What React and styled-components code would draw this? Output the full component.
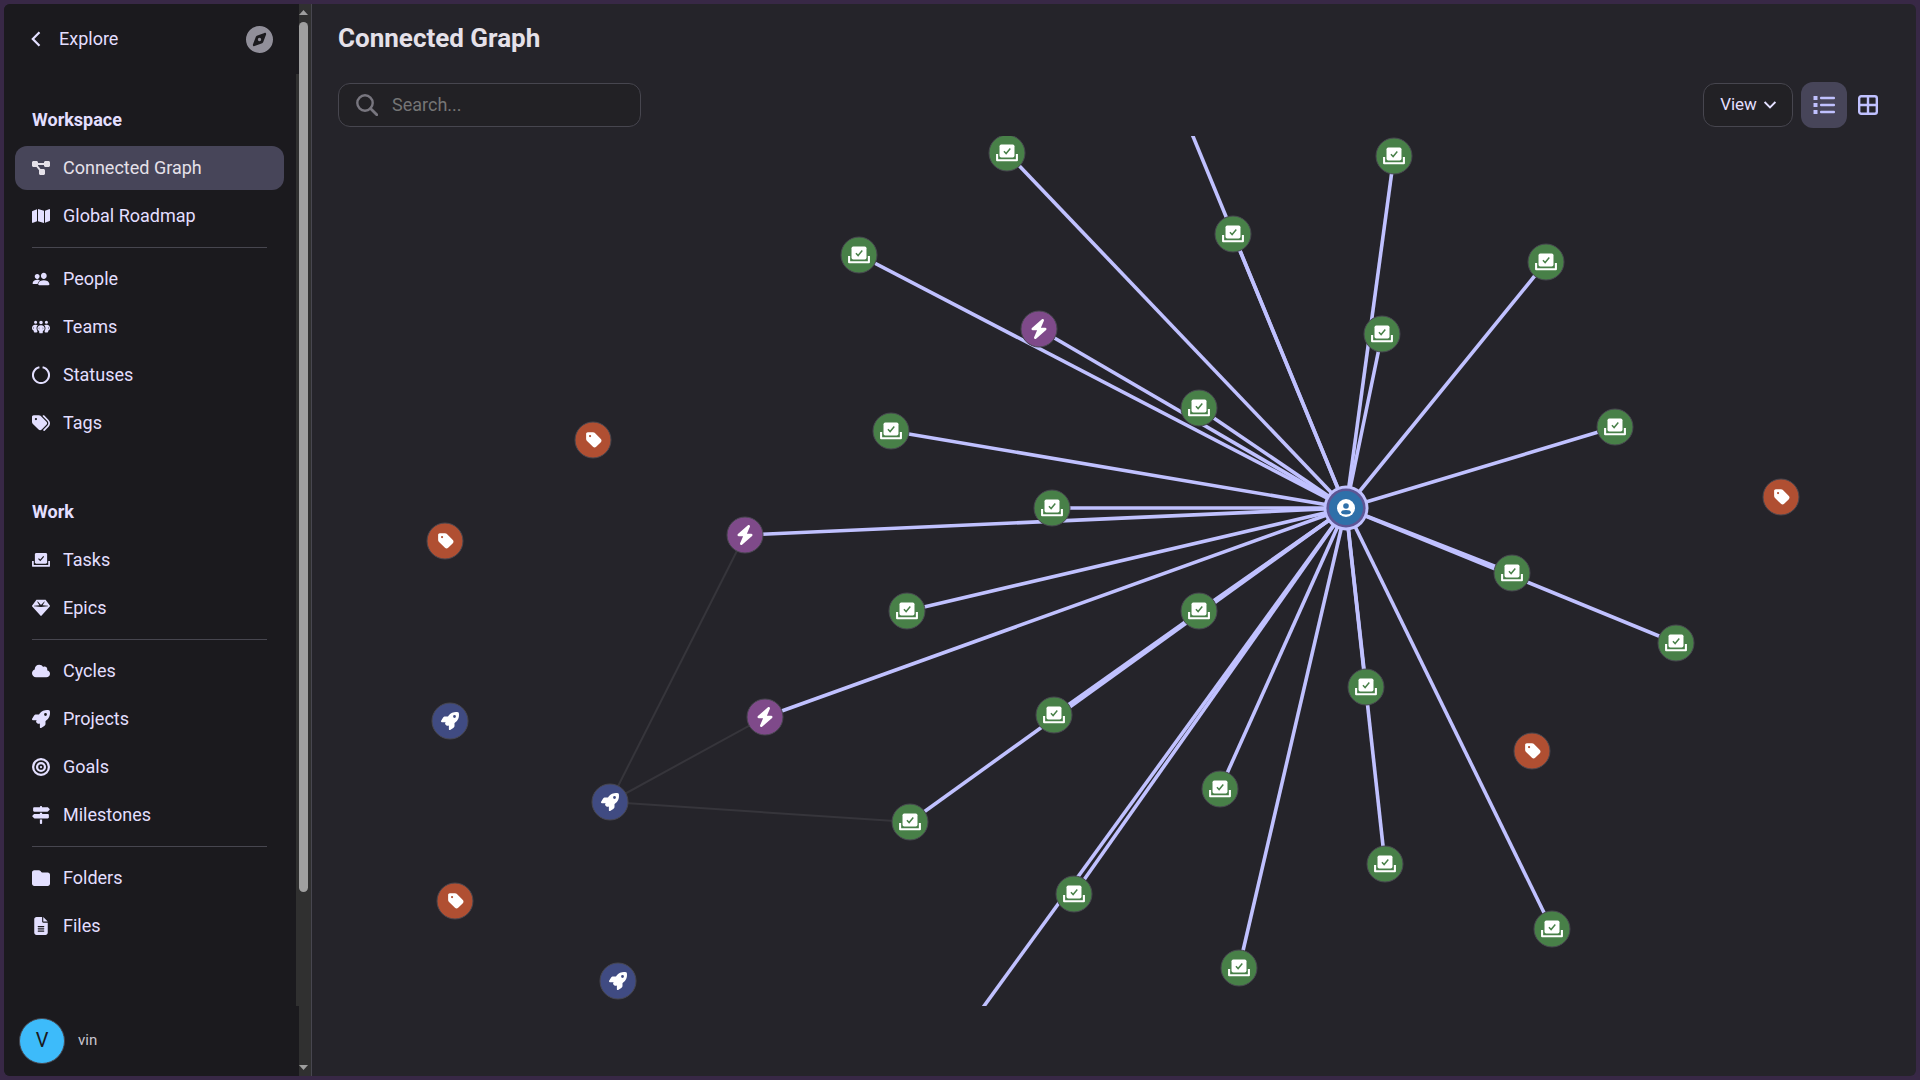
import { useState } from "react";
import styled, { createGlobalStyle, css } from "styled-components";
import {
    FaBolt,
    FaBullseye,
    FaCloud,
    FaCompass,
    FaDiagramProject,
    FaFileLines,
    FaFolder,
    FaGem,
    FaMap,
    FaPeopleGroup,
    FaRocket,
    FaSignsPost,
    FaTag,
    FaTags,
} from "react-icons/fa6";
import { IoPeople } from "react-icons/io5";

const FRAME = "#382846";
const SIDEBAR = "#1b1a1e";
const SURFACE = "#25242a";
const FIELD = "#222125";
const SELECTED = "#474559";
const OUTLINE = "#47464f";
const TRACK = "#303030";
const THUMB = "#9f9f9f";
const TEXT = "#e3dfff";
const TITLE = "#e5e1e9";
const MUTED = "#918f9a";
const PRIMARY = "#c0c1ff";
const AVATAR = "#3dbbfa";

const GlobalStyle = createGlobalStyle`
    * {
        box-sizing: border-box;
    }
    body {
        margin: 0;
        background-color: ${FRAME};
        font-family: Roboto, "Liberation Sans", sans-serif;
        font-size: 18px;
        color: ${TEXT};
    }
    button, input {
        font: inherit;
        color: inherit;
    }
`

const TaskIcon = ({ size = 18, x, y, check = SIDEBAR }) => (
    <svg width={size} height={size} x={x} y={y} viewBox="0 0 20 20" fill="none" aria-hidden="true">
        <rect x="3.2" y="2.2" width="13.6" height="12" rx="1.6" fill="currentColor" />
        <path d="M1 11v5.6h18V11" stroke="currentColor" strokeWidth="1.9" strokeLinejoin="round" />
        <path d="m7.2 8.4 2 2.1 3.8-4.6" stroke={check} strokeWidth="1.3" />
    </svg>
)

const StatusIcon = () => (
    <svg width="18" height="18" viewBox="0 0 18 18" fill="none" aria-hidden="true">
        <path d="M10.6 1.2a8 8 0 1 1-3.2 0" stroke="currentColor" strokeWidth="2" />
    </svg>
)

const sections = [
    {
        title: "Workspace",
        groups: [
            [
                { name: "Connected Graph", icon: FaDiagramProject },
                { name: "Global Roadmap", icon: FaMap },
            ],
            [
                { name: "People", icon: IoPeople },
                { name: "Teams", icon: FaPeopleGroup },
                { name: "Statuses", icon: StatusIcon },
                { name: "Tags", icon: FaTags },
            ],
        ],
    },
    {
        title: "Work",
        groups: [
            [
                { name: "Tasks", icon: TaskIcon },
                { name: "Epics", icon: FaGem },
            ],
            [
                { name: "Cycles", icon: FaCloud },
                { name: "Projects", icon: FaRocket },
                { name: "Goals", icon: FaBullseye },
                { name: "Milestones", icon: FaSignsPost },
            ],
            [
                { name: "Folders", icon: FaFolder },
                { name: "Files", icon: FaFileLines },
            ],
        ],
    },
]

const nodeColors = {
    task: "#488048",
    epic: "#7f4a8a",
    tag: "#b04f32",
    project: "#404b82",
    person: "#2f70a9",
}

const person = { x: 1034, y: 372 };

const nodes = [
    { type: "task", x: 695, y: 17 },
    { type: "task", x: 1082, y: 20 },
    { type: "task", x: 921, y: 98 },
    { type: "task", x: 547, y: 119 },
    { type: "task", x: 1234, y: 126 },
    { type: "task", x: 1070, y: 198 },
    { type: "task", x: 887, y: 272 },
    { type: "task", x: 579, y: 295 },
    { type: "task", x: 1303, y: 291 },
    { type: "task", x: 740, y: 372 },
    { type: "task", x: 1200, y: 437 },
    { type: "task", x: 1364, y: 507 },
    { type: "task", x: 595, y: 475 },
    { type: "task", x: 887, y: 475 },
    { type: "task", x: 1054, y: 551 },
    { type: "task", x: 742, y: 579 },
    { type: "task", x: 908, y: 653 },
    { type: "task", x: 598, y: 686 },
    { type: "task", x: 1073, y: 728 },
    { type: "task", x: 762, y: 758 },
    { type: "task", x: 1240, y: 793 },
    { type: "task", x: 927, y: 832 },
    // these two sit outside the visible part of the canvas
    { type: "task", x: 857, y: -58 },
    { type: "task", x: 635, y: 921 },
    { type: "epic", x: 727, y: 193 },
    { type: "epic", x: 433, y: 399 },
    { type: "epic", x: 453, y: 581 },
    { type: "tag", x: 281, y: 304 },
    { type: "tag", x: 133, y: 405 },
    { type: "tag", x: 143, y: 765 },
    { type: "tag", x: 1469, y: 361 },
    { type: "tag", x: 1220, y: 615 },
    { type: "project", x: 138, y: 585 },
    { type: "project", x: 298, y: 666 },
    { type: "project", x: 306, y: 845 },
]

const projectLinks = [
    { x1: 298, y1: 666, x2: 433, y2: 399 },
    { x1: 298, y1: 666, x2: 453, y2: 581 },
    { x1: 298, y1: 666, x2: 598, y2: 686 },
]

const Node = ({ type, x, y }) => {
    return (
        <g transform={`translate(${x} ${y})`} color="#fff">
            <circle r="18" fill={nodeColors[type]} stroke={OUTLINE} strokeWidth="1" />
            {type == "task" && <TaskIcon size={22} x={-11} y={-11} check={nodeColors.task} />}
            {type == "epic" && <FaBolt size={20} x={-10} y={-10} />}
            {type == "tag" && <FaTag size={18} x={-8} y={-9} />}
            {type == "project" && <FaRocket size={18} x={-9} y={-9} />}
        </g>
    )
}

const Graph = () => {
    const linked = nodes.filter(i => i.type == "task" || i.type == "epic");

    return (
        <Canvas role="img" aria-label="Connected graph">
            {projectLinks.map((link, index) => (
                <line key={index} {...link} stroke="#36353b" strokeWidth="2" />
            ))}
            {linked.map((node, index) => (
                <line
                    key={index}
                    x1={person.x}
                    y1={person.y}
                    x2={node.x}
                    y2={node.y}
                    stroke={PRIMARY}
                    strokeWidth="3.6"
                />
            ))}
            {nodes.map((node, index) => <Node key={index} {...node} />)}
            <g transform={`translate(${person.x} ${person.y})`}>
                <circle r="22.5" fill={PRIMARY} />
                <circle r="19.6" fill="#5d5594" />
                <circle r="17" fill={nodeColors.person} />
                <circle r="9" fill="#fff" />
                <circle cy="-2" r="2.8" fill={nodeColors.person} />
                <ellipse cy="4.2" rx="4.8" ry="2.2" fill={nodeColors.person} />
            </g>
        </Canvas>
    )
}

const Sidebar = () => {
    const [active, setActive] = useState("Connected Graph");

    return (
        <SidebarWrap>
            <SidebarContent>
                <SidebarHeader>
                    <BackButton type="button">
                        <svg width="10" height="16" viewBox="0 0 10 16" fill="none" aria-hidden="true">
                            <path d="M8.5 1.2 1.8 8l6.7 6.8" stroke="currentColor" strokeWidth="2.2" />
                        </svg>
                        <span>Explore</span>
                    </BackButton>
                    <CompassButton type="button" aria-label="Explore workspace">
                        <FaCompass size={27} />
                    </CompassButton>
                </SidebarHeader>
                <Nav>
                    {sections.map(section => (
                        <Section key={section.title}>
                            <SectionTitle>{section.title}</SectionTitle>
                            {section.groups.map((group, index) => (
                                <Group key={index}>
                                    {group.map(({ name, icon: Icon }) => (
                                        <NavItem
                                            key={name}
                                            href="#"
                                            $isActive={active == name}
                                            onClick={() => setActive(name)}
                                        >
                                            <Icon size={18} />
                                            <span>{name}</span>
                                        </NavItem>
                                    ))}
                                </Group>
                            ))}
                        </Section>
                    ))}
                </Nav>
                <Profile>
                    <Avatar>V</Avatar>
                    <span>vin</span>
                </Profile>
            </SidebarContent>
            <Scrollbar aria-hidden="true">
                <svg width="9" height="5" viewBox="0 0 9 5"><path d="M0 5 4.5 0 9 5z" fill={THUMB} /></svg>
                <ScrollArea>
                    <Thumb />
                </ScrollArea>
                <svg width="9" height="5" viewBox="0 0 9 5"><path d="M0 0l4.5 5L9 0z" fill={THUMB} /></svg>
            </Scrollbar>
        </SidebarWrap>
    )
}

const App = () => {
    const [layout, setLayout] = useState("list");

    return (
        <>
            <GlobalStyle />
            <Window>
                <Sidebar />
                <Main>
                    <PageTitle>Connected Graph</PageTitle>
                    <Toolbar>
                        <SearchField>
                            <svg width="22" height="22" viewBox="0 0 22 22" fill="none" aria-hidden="true">
                                <circle cx="9" cy="9" r="7.7" stroke="currentColor" strokeWidth="2.4" />
                                <path d="m14.5 14.5 6.3 6.3" stroke="currentColor" strokeWidth="2.8" strokeLinecap="round" />
                            </svg>
                            <input type="text" placeholder="Search..." aria-label="Search" />
                        </SearchField>
                        <Actions>
                            <ViewButton type="button">
                                <span>View</span>
                                <svg width="12" height="8" viewBox="0 0 12 8" fill="none" aria-hidden="true">
                                    <path d="m.6 1 5.4 5.4L11.4 1" stroke="currentColor" strokeWidth="1.9" />
                                </svg>
                            </ViewButton>
                            <Toggles>
                                <Toggle
                                    type="button"
                                    aria-label="List"
                                    $isActive={layout == "list"}
                                    onClick={() => setLayout("list")}
                                >
                                    <svg width="22" height="18" viewBox="0 0 22 18" fill="currentColor" aria-hidden="true">
                                        <path d="M.5 0h4v4h-4zM.5 7h4v4h-4zM.5 14h4v4h-4z" />
                                        <rect x="7" y=".7" width="15" height="2.6" rx="1" />
                                        <rect x="7" y="7.7" width="15" height="2.6" rx="1" />
                                        <rect x="7" y="14.7" width="15" height="2.6" rx="1" />
                                    </svg>
                                </Toggle>
                                <Toggle
                                    type="button"
                                    aria-label="Grid"
                                    $isActive={layout == "grid"}
                                    onClick={() => setLayout("grid")}
                                >
                                    <svg width="20" height="20" viewBox="0 0 20 20" fill="none" stroke="currentColor" strokeWidth="2.4" aria-hidden="true">
                                        <rect x="1.2" y="1.2" width="17.6" height="17.6" rx="2" />
                                        <path d="M10 1v18M1 10h18" />
                                    </svg>
                                </Toggle>
                            </Toggles>
                        </Actions>
                    </Toolbar>
                    <Graph />
                </Main>
            </Window>
        </>
    )
}

export default App;

const Window = styled.div`
    display: flex;
    min-height: calc(100vh - 8px);
    margin: 4px;
    border-radius: 6px;
    overflow: hidden;
    background-color: ${SURFACE};
`
const SidebarWrap = styled.aside`
    display: flex;
    flex: none;
    background-color: ${SIDEBAR};
    border-right: 1px solid ${OUTLINE};
`
const SidebarContent = styled.div`
    display: flex;
    flex-direction: column;
    width: 295px;
`
const SidebarHeader = styled.div`
    display: flex;
    justify-content: space-between;
    align-items: center;
    height: 70px;
    padding: 0 26px 0 27px;
`
const BackButton = styled.button`
    display: flex;
    align-items: center;
    gap: 18px;
    padding: 0;
    border: none;
    background: none;
    cursor: pointer;

    span {
        padding-bottom: 2px;
    }
`
const CompassButton = styled.button`
    display: flex;
    padding: 0;
    border: none;
    background: none;
    color: ${MUTED};
    cursor: pointer;
`
const Nav = styled.nav`
    display: flex;
    flex-direction: column;
    flex: 1;
    gap: 55px;
    padding: 34px 12px 32px 11px;
    border-right: 3px solid ${TRACK};
`
const Section = styled.div`
    display: flex;
    flex-direction: column;
`
const SectionTitle = styled.h2`
    margin: 0 17px 14px;
    font-size: 18px;
    line-height: 24px;
    font-weight: 700;
`
const Group = styled.div`
    display: flex;
    flex-direction: column;
    gap: 4px;

    & + &::before {
        content: "";
        height: 1px;
        margin: 9px 17px 5px;
        background-color: ${OUTLINE};
    }
`
const NavItem = styled.a((props) => css`
    display: flex;
    align-items: center;
    gap: 13px;
    height: 44px;
    padding: 0 17px;
    border-radius: 12px;
    color: ${props.$isActive ? TITLE : TEXT};
    background-color: ${props.$isActive ? SELECTED : 'transparent'};
    text-decoration: none;

    svg {
        flex: none;
    }
    span {
        padding-bottom: 2px;
    }
`)
const Profile = styled.div`
    display: flex;
    align-items: center;
    gap: 13px;
    height: 70px;
    padding: 0 15px;
    font-size: 15px;
    color: #c8c5d0;

    span {
        padding-bottom: 2px;
    }
`
const Avatar = styled.div`
    display: flex;
    justify-content: center;
    align-items: center;
    width: 46px;
    height: 46px;
    padding-bottom: 2px;
    border: 1px solid ${OUTLINE};
    border-radius: 50%;
    font-size: 20px;
    color: ${SIDEBAR};
    background-color: ${AVATAR};
`
const Scrollbar = styled.div`
    display: flex;
    flex-direction: column;
    gap: 7px;
    width: 12px;
    padding: 6px 0;
    background-color: ${TRACK};
`
const ScrollArea = styled.div`
    flex: 1;
`
const Thumb = styled.div`
    width: 9px;
    height: 84%;
    border-radius: 5px;
    background-color: ${THUMB};
`
const Main = styled.main`
    display: flex;
    flex-direction: column;
    flex: 1;
    min-width: 0;
    padding: 18px 0 70px;
`
const PageTitle = styled.h1`
    margin: 0 26px 28px;
    font-size: 26px;
    line-height: 32px;
    font-weight: 700;
    color: ${TITLE};
`
const Toolbar = styled.div`
    display: flex;
    justify-content: space-between;
    align-items: center;
    margin: 0 27px 8px 26px;
`
const SearchField = styled.label`
    display: flex;
    align-items: center;
    gap: 14px;
    width: 303px;
    height: 44px;
    padding: 0 17px;
    border: 1px solid ${OUTLINE};
    border-radius: 12px;
    background-color: ${FIELD};
    color: #78767f;

    input {
        flex: 1;
        min-width: 0;
        padding: 0 0 2px;
        border: none;
        outline: none;
        background: none;
        color: ${TITLE};
    }
    input::placeholder {
        color: #757575;
    }
`
const Actions = styled.div`
    display: flex;
    align-items: center;
    gap: 8px;
`
const ViewButton = styled.button`
    display: flex;
    justify-content: center;
    align-items: center;
    gap: 7px;
    width: 90px;
    height: 44px;
    padding: 0;
    border: 1px solid ${OUTLINE};
    border-radius: 12px;
    font-size: 17px;
    background-color: ${FIELD};
    cursor: pointer;

    span {
        padding-bottom: 2px;
    }
`
const Toggles = styled.div`
    display: flex;
`
const Toggle = styled.button((props) => css`
    display: flex;
    justify-content: center;
    align-items: center;
    width: ${props.$isActive ? '46px' : '42px'};
    height: 46px;
    padding: 0;
    border: none;
    border-radius: 12px;
    color: ${PRIMARY};
    background-color: ${props.$isActive ? SELECTED : 'transparent'};
    cursor: pointer;
`)
const Canvas = styled.svg`
    flex: 1;
    width: 100%;
    min-height: 400px;
    overflow: hidden;
`
